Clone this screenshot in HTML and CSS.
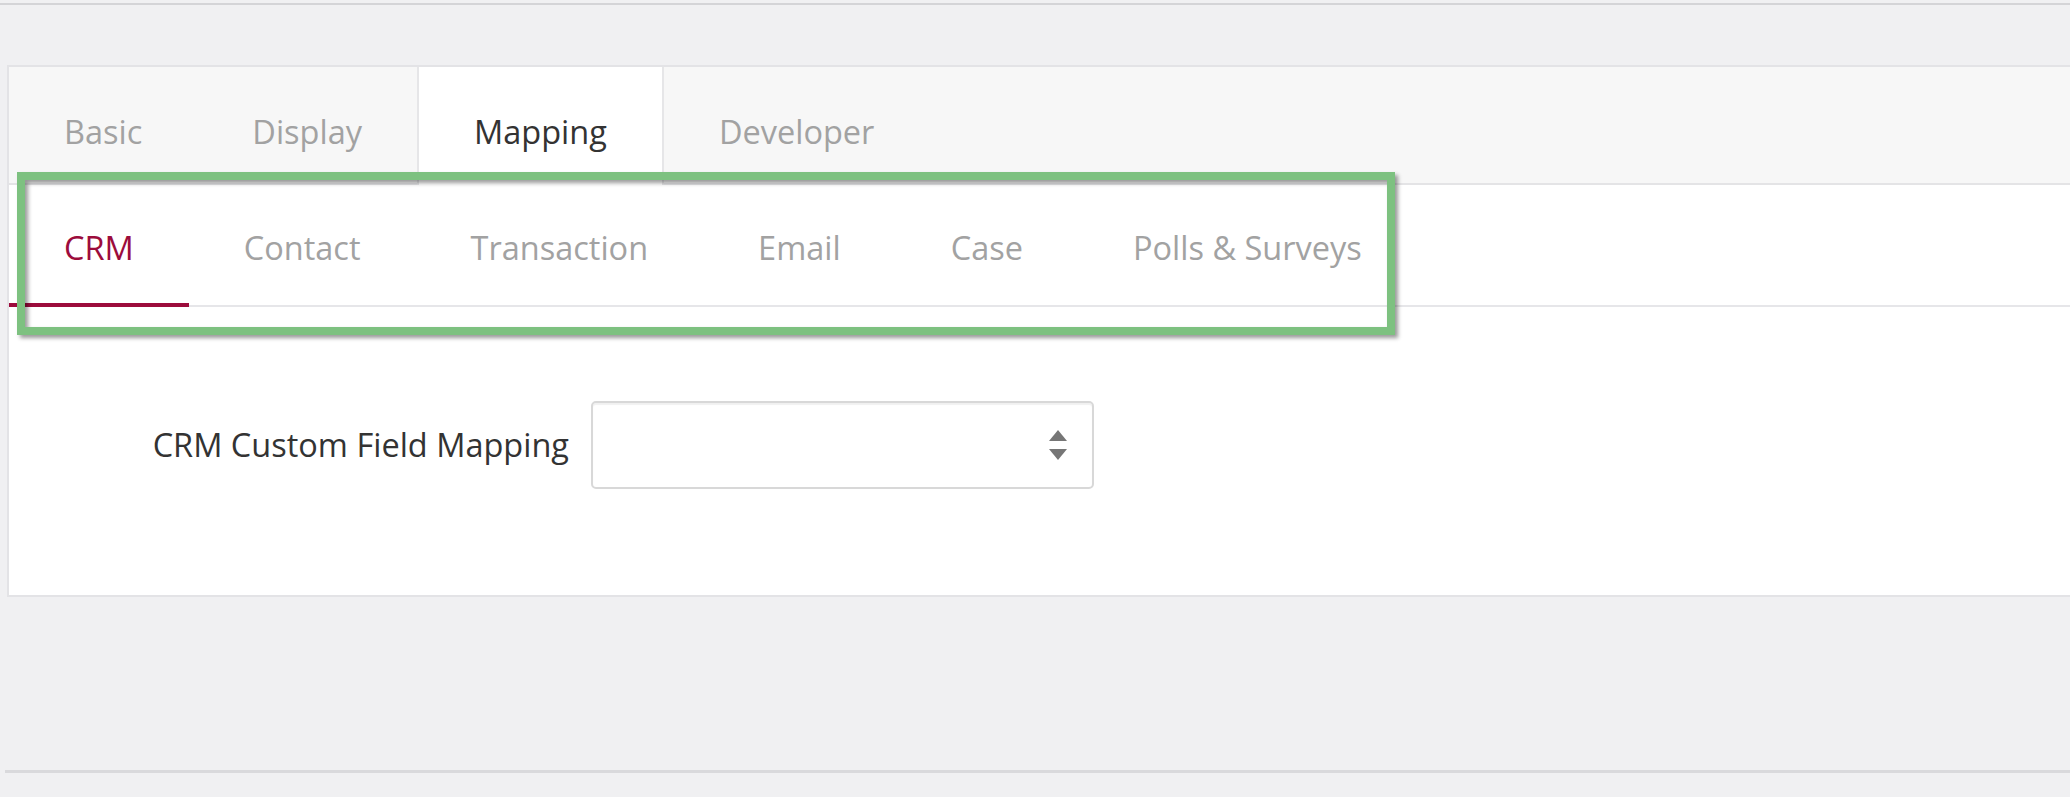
FILE: index.html
```html
<!DOCTYPE html>
<html lang="en">
<head>
    <meta charset="UTF-8">
    <meta name="viewport" content="width=device-width, initial-scale=1.0">
    <title>Mapping</title>
    <link rel="stylesheet" href="styles.css">
</head>
<body>
    <div class="top-rule"></div>
    <div class="panel">
        <ul class="tabs">
            <li class="tab">Basic</li>
            <li class="tab">Display</li>
            <li class="tab active">Mapping</li>
            <li class="tab">Developer</li>
        </ul>
        <ul class="subtabs">
            <li class="subtab active">CRM</li>
            <li class="subtab">Contact</li>
            <li class="subtab">Transaction</li>
            <li class="subtab">Email</li>
            <li class="subtab">Case</li>
            <li class="subtab">Polls &amp; Surveys</li>
        </ul>
        <div class="panel-body">
            <div class="field">
                <label class="field-label">CRM Custom Field Mapping</label>
                <div class="select-box">
                    <svg class="select-arrows" width="18" height="30" viewBox="0 0 18 30">
                        <polygon points="0,11 9,0 18,11" fill="#767676"/>
                        <polygon points="0,19 18,19 9,30" fill="#767676"/>
                    </svg>
                </div>
            </div>
        </div>
    </div>
    <div class="bottom-rule"></div>
    <div class="highlight"></div>
</body>
</html>
```

FILE: styles.css
```css
body {
    margin: 0;
    padding-top: 3px;
    background-color: #f0f0f2;
    font-family: "Open Sans", "Liberation Sans", sans-serif;
    color: #333333;
}

.top-rule {
    height: 2px;
    background-color: #d4d4d7;
}

.panel {
    margin-top: 60px;
    margin-left: 7px;
    background-color: #ffffff;
    border: 2px solid #e3e3e6;
    border-right: none;
}

.tabs, .subtabs {
    display: flex;
    list-style: none;
    margin: 0;
    padding: 0;
}

.tabs {
    background-color: #f7f7f7;
    border-bottom: 2px solid #e4e4e6;
}

.tab {
    padding: 43px 55px 29px;
    font-size: 32.5px;
    line-height: 44px;
    color: #a2a2a2;
}

.tab.active {
    background-color: #ffffff;
    color: #333333;
    border-left: 2px solid #e6e6e8;
    border-right: 2px solid #e6e6e8;
    margin-bottom: -2px;
    padding-bottom: 31px;
}

.subtabs {
    border-bottom: 2px solid #e6e6e9;
}

.subtab {
    padding: 41px 55px 33px;
    font-size: 32.5px;
    line-height: 44px;
    color: #a2a2a2;
    border-bottom: 4px solid transparent;
    margin-bottom: -2px;
}

.subtab.active {
    color: #9c0c3c;
    border-bottom-color: #9c0c3c;
}

.panel-body {
    padding: 94px 0 106px;
}

.field {
    display: grid;
    grid-template-columns: 560px 503px;
    column-gap: 22px;
    align-items: center;
}

.field-label {
    font-size: 32.5px;
    line-height: 44px;
    text-align: right;
    color: #333333;
}

.select-box {
    box-sizing: border-box;
    height: 88px;
    border: 2px solid #d8d8d8;
    border-radius: 5px;
    box-shadow: inset 0 2px 1px rgba(0, 0, 0, 0.06);
    display: flex;
    justify-content: flex-end;
    align-items: center;
    padding-right: 25px;
}

.bottom-rule {
    margin-top: 173px;
    margin-left: 5px;
    height: 3px;
    background-color: #d9d9dc;
}

.highlight {
    position: absolute;
    left: 17px;
    top: 172px;
    width: 1378px;
    height: 163px;
    box-sizing: border-box;
    border: 8px solid #7dc180;
    box-shadow: 3px 3px 4px rgba(0, 0, 0, 0.4), inset 3px 3px 4px rgba(0, 0, 0, 0.4);
}
```
